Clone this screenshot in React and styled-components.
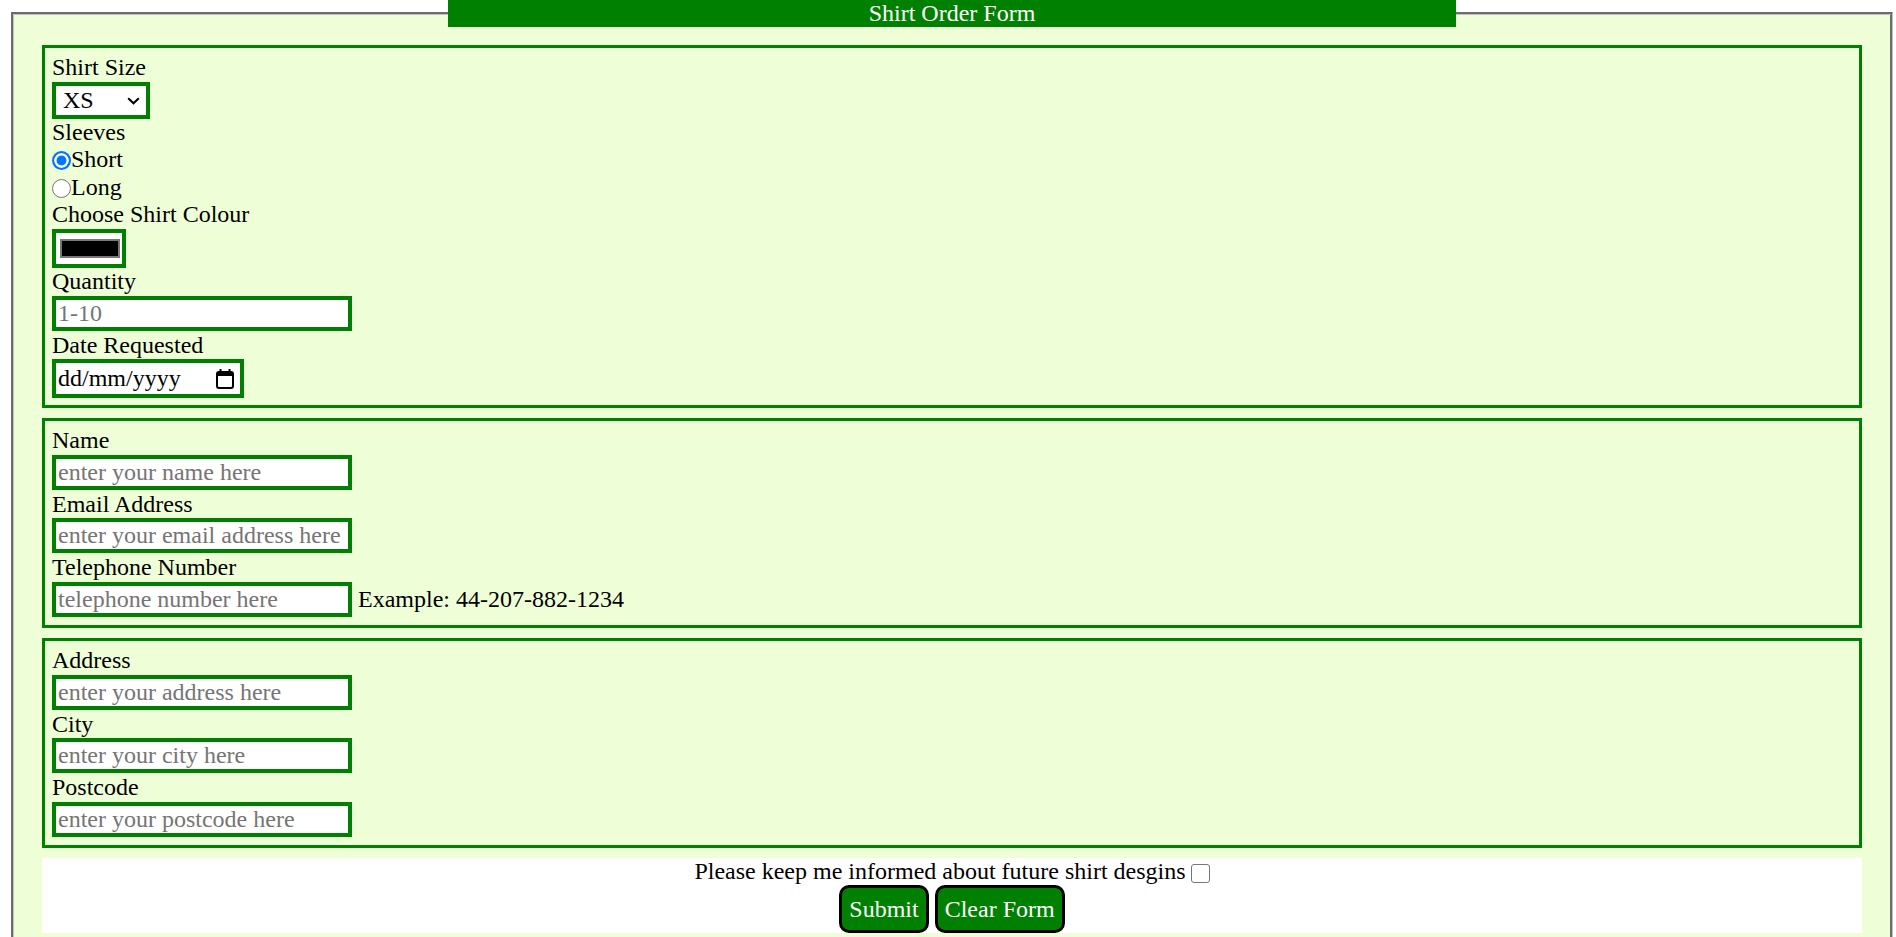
import React from 'react';
import styled, { createGlobalStyle } from 'styled-components';

const GlobalStyle = createGlobalStyle`
  body {
    margin: 0;
    background: #ffffff;
    font-family: "Liberation Serif", "Times New Roman", serif;
    font-size: 24px;
    line-height: 27.6px;
    color: #000000;
  }
`;

const Form = styled.form`
  margin: 0;
`;

const OrderFieldset = styled.fieldset`
  margin: 0 3px 0 11px;
  padding: 18px 28px 16px;
  border: 3px groove #c0c0c0;
  background-color: #eeffd8;
  min-width: 0;
`;

const Title = styled.legend`
  width: 1008px;
  margin: 0 auto;
  padding: 0;
  background-color: #008000;
  color: #ffffff;
  text-align: center;
  font-size: 24px;
  line-height: 27px;
`;

const Group = styled.fieldset`
  margin: 0 0 10px;
  padding: 6px 7px 7px;
  border: 3px solid #008000;
  min-width: 0;
`;

const Label = styled.label`
  display: block;
  font-size: 24px;
  line-height: 27.6px;
`;

const fieldBase = `
  display: block;
  box-sizing: border-box;
  border: 4px solid #008000;
  background-color: #ffffff;
  font-family: "Liberation Serif", "Times New Roman", serif;
  font-size: 24px;
  color: #000000;
  outline: none;
  margin: 0;
`;

const SelectWrap = styled.div`
  position: relative;
  width: 98px;
`;

const Select = styled.select`
  ${fieldBase}
  appearance: none;
  width: 98px;
  height: 37px;
  padding: 0 4px 0 7px;
  border-radius: 0;
  cursor: pointer;
`;

const Chevron = styled.svg`
  position: absolute;
  right: 10px;
  top: 15px;
  pointer-events: none;
`;

const RadioRow = styled.label`
  display: flex;
  align-items: center;
  line-height: 27.6px;
`;

const Radio = styled.input.attrs({ type: 'radio' })`
  appearance: none;
  box-sizing: border-box;
  width: 19px;
  height: 19px;
  margin: 2px 0 0 0;
  border: 1.5px solid #767676;
  border-radius: 50%;
  background-color: #ffffff;

  &:checked {
    border: 2px solid #0075ff;
    background-color: #0075ff;
    box-shadow: inset 0 0 0 2.5px #ffffff;
  }
`;

const ColourInput = styled.input.attrs({ type: 'color' })`
  ${fieldBase}
  width: 74px;
  height: 39px;
  padding: 0;
  cursor: pointer;

  &::-webkit-color-swatch-wrapper {
    padding: 6px 2px 6px 4px;
  }

  &::-webkit-color-swatch {
    border: 2px solid #777777;
    border-radius: 0;
  }
`;

const TextInput = styled.input`
  ${fieldBase}
  width: 300px;
  height: 35px;
  padding: 1px 2px;
  margin-bottom: 1px;

  &::placeholder {
    color: #757575;
  }
`;

const DateBox = styled.div`
  display: flex;
  align-items: center;
  box-sizing: border-box;
  width: 192px;
  height: 39px;
  border: 4px solid #008000;
  background-color: #ffffff;
  padding: 0 6px 0 2px;
`;

const DateText = styled.input`
  flex: 1;
  min-width: 0;
  border: none;
  outline: none;
  padding: 0;
  background: transparent;
  font-family: "Liberation Serif", "Times New Roman", serif;
  font-size: 24px;

  &::placeholder {
    color: #000000;
  }
`;

const InlineRow = styled.div`
  display: flex;
  align-items: center;
  gap: 6px;
`;

const Hint = styled.span`
  font-size: 24px;
`;

const Footer = styled.div`
  background-color: #ffffff;
  display: flex;
  flex-direction: column;
  align-items: center;
`;

const InformRow = styled.label`
  display: flex;
  align-items: center;
  gap: 5px;
  line-height: 27.6px;
`;

const Checkbox = styled.input.attrs({ type: 'checkbox' })`
  appearance: none;
  box-sizing: border-box;
  width: 19px;
  height: 19px;
  margin: 3px 0 0 0;
  border: 1.5px solid #767676;
  border-radius: 3px;
  background-color: #ffffff;
`;

const Buttons = styled.div`
  display: flex;
  gap: 6px;
`;

const Button = styled.button`
  box-sizing: border-box;
  height: 48px;
  padding: 0 7px;
  border: 3px solid #000000;
  border-radius: 10px;
  background-color: #008000;
  color: #ffffff;
  font-family: "Liberation Serif", "Times New Roman", serif;
  font-size: 24px;
  cursor: pointer;
`;

function CalendarIcon() {
  return (
    <svg width="18" height="22" viewBox="0 0 18 22" aria-hidden="true">
      <rect x="1" y="4" width="16" height="16" rx="2" fill="none" stroke="#000" strokeWidth="2" />
      <rect x="1" y="4" width="16" height="4" fill="#000" />
      <rect x="3.5" y="1" width="2" height="4" fill="#000" />
      <rect x="12.5" y="1" width="2" height="4" fill="#000" />
    </svg>
  );
}

export default function App() {
  return (
    <>
      <GlobalStyle />
      <Form onSubmit={(e) => e.preventDefault()}>
        <OrderFieldset>
          <Title>Shirt Order Form</Title>

          <Group>
            <Label htmlFor="size">Shirt Size</Label>
            <SelectWrap>
              <Select id="size" defaultValue="XS">
                <option>XS</option>
                <option>S</option>
                <option>M</option>
                <option>L</option>
                <option>XL</option>
              </Select>
              <Chevron width="13" height="8" viewBox="0 0 13 8" aria-hidden="true">
                <path d="M1.2 1.2 L6.5 6.3 L11.8 1.2" fill="none" stroke="#000" strokeWidth="2" />
              </Chevron>
            </SelectWrap>
            <Label as="div">Sleeves</Label>
            <RadioRow>
              <Radio name="sleeves" value="short" defaultChecked />
              Short
            </RadioRow>
            <RadioRow>
              <Radio name="sleeves" value="long" />
              Long
            </RadioRow>
            <Label htmlFor="colour">Choose Shirt Colour</Label>
            <ColourInput id="colour" defaultValue="#000000" />
            <Label htmlFor="qty">Quantity</Label>
            <TextInput id="qty" type="number" placeholder="1-10" />
            <Label htmlFor="date">Date Requested</Label>
            <DateBox>
              <DateText id="date" placeholder="dd/mm/yyyy" />
              <CalendarIcon />
            </DateBox>
          </Group>

          <Group>
            <Label htmlFor="name">Name</Label>
            <TextInput id="name" placeholder="enter your name here" />
            <Label htmlFor="email">Email Address</Label>
            <TextInput id="email" type="email" placeholder="enter your email address here" />
            <Label htmlFor="tel">Telephone Number</Label>
            <InlineRow>
              <TextInput id="tel" type="tel" placeholder="telephone number here" />
              <Hint>Example: 44-207-882-1234</Hint>
            </InlineRow>
          </Group>

          <Group>
            <Label htmlFor="address">Address</Label>
            <TextInput id="address" placeholder="enter your address here" />
            <Label htmlFor="city">City</Label>
            <TextInput id="city" placeholder="enter your city here" />
            <Label htmlFor="postcode">Postcode</Label>
            <TextInput id="postcode" placeholder="enter your postcode here" />
          </Group>

          <Footer>
            <InformRow>
              Please keep me informed about future shirt desgins
              <Checkbox />
            </InformRow>
            <Buttons>
              <Button type="submit">Submit</Button>
              <Button type="reset">Clear Form</Button>
            </Buttons>
          </Footer>
        </OrderFieldset>
      </Form>
    </>
  );
}
